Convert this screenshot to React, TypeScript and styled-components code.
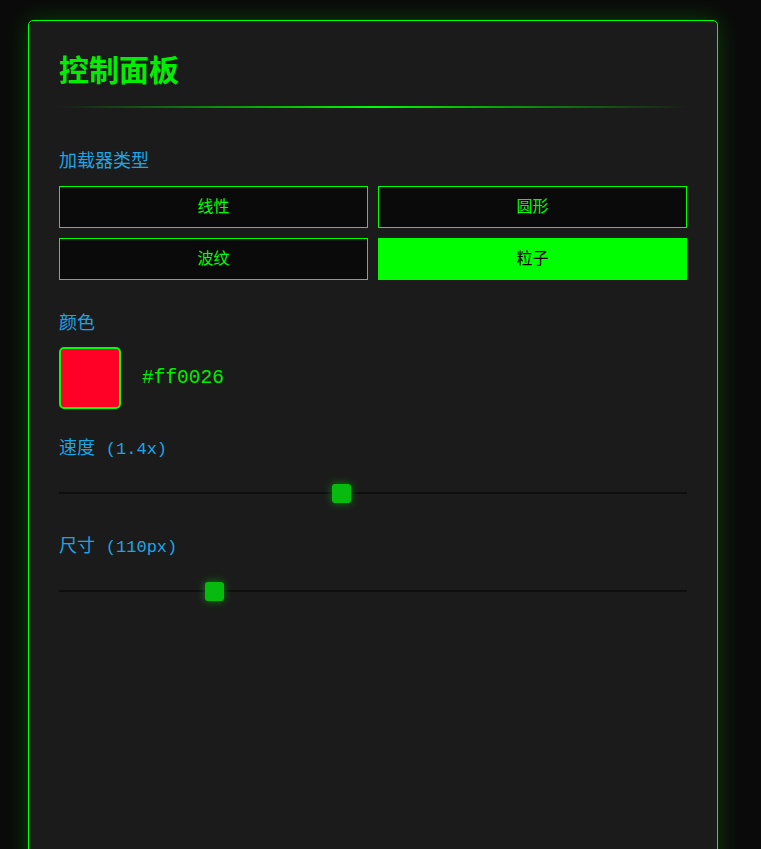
import { FC, useState } from 'react';
import styled, { createGlobalStyle } from 'styled-components';

const GlobalStyle = createGlobalStyle`
    body {
        margin: 0;
        background: #0a0a0a;
        font-family: "Liberation Mono", "Noto Sans CJK SC", monospace;
    }
`;

const Panel = styled.section`
    box-sizing: border-box;
    width: 690px;
    min-height: 900px;
    margin: 20px 28px;
    padding: 30px;
    background: #1b1b1b;
    border: 1px solid #00ff00;
    border-radius: 5px;
    box-shadow: 0 0 24px rgba(0, 255, 0, 0.22);
`;

const Title = styled.h1`
    margin: 2px 0 0;
    color: #00ee00;
    font-size: 30px;
    font-weight: bold;
    line-height: 40px;
`;

const Divider = styled.div`
    height: 2px;
    margin: 13px 0 42px;
    background: linear-gradient(90deg, transparent, #00ff00, transparent);
`;

const Section = styled.div<{ $space?: number }>`
    margin-bottom: ${({ $space = 28 }) => $space}px;
`;

const Label = styled.div`
    color: #1ba6e4;
    font-size: 18px;
    line-height: 24px;
    margin-bottom: 12px;

    span {
        font-size: 17px;
    }
`;

const ButtonGrid = styled.div`
    display: grid;
    grid-template-columns: 1fr 1fr;
    gap: 10px;
`;

const TypeButton = styled.button<{ $active: boolean }>`
    height: 42px;
    padding: 0 0 5px;
    font-family: inherit;
    font-size: 16px;
    color: ${({ $active }) => ($active ? '#000' : '#00ff00')};
    background: ${({ $active }) => ($active ? '#00ff00' : '#0a0a0a')};
    border: 1px solid #00ff00;
    cursor: pointer;
`;

const ColorRow = styled.div`
    display: flex;
    align-items: center;
    gap: 21px;
    margin-top: -1px;
`;

const Swatch = styled.div<{ $color: string }>`
    box-sizing: border-box;
    width: 62px;
    height: 62px;
    border: 2px solid #00ff00;
    border-radius: 5px;
    background: ${({ $color }) => $color};
`;

const HexText = styled.span`
    color: #00ee00;
    font-size: 19.5px;
`;

const Slider = styled.input`
    -webkit-appearance: none;
    appearance: none;
    display: block;
    width: 100%;
    height: 2px;
    margin: 30px 0 41px;
    background: #0e0e0e;
    outline: none;

    &::-webkit-slider-thumb {
        -webkit-appearance: none;
        width: 19px;
        height: 19px;
        border-radius: 3px;
        background: #07bb0e;
        box-shadow: 0 0 8px rgba(0, 255, 0, 0.45);
        cursor: pointer;
    }
`;

const loaderTypes = ['线性', '圆形', '波纹', '粒子'];

const App: FC = () => {
    const [type, setType] = useState('粒子');
    const [speed, setSpeed] = useState(1.4);
    const [size, setSize] = useState(110);
    const color = '#ff0026';

    return (
        <>
            <GlobalStyle />
            <Panel>
                <Title>控制面板</Title>
                <Divider />
                <Section $space={32}>
                    <Label>加载器类型</Label>
                    <ButtonGrid>
                        {loaderTypes.map((t) => (
                            <TypeButton key={t} $active={t === type} onClick={() => setType(t)}>
                                {t}
                            </TypeButton>
                        ))}
                    </ButtonGrid>
                </Section>
                <Section>
                    <Label>颜色</Label>
                    <ColorRow>
                        <Swatch $color={color} />
                        <HexText>{color}</HexText>
                    </ColorRow>
                </Section>
                <Section>
                    <Label>
                        速度 <span>({speed.toFixed(1)}x)</span>
                    </Label>
                    <Slider
                        type="range"
                        min={0.1}
                        max={3}
                        step={0.1}
                        value={speed}
                        onChange={(e) => setSpeed(Number(e.target.value))}
                    />
                </Section>
                <Section>
                    <Label>
                        尺寸 <span>({size}px)</span>
                    </Label>
                    <Slider
                        type="range"
                        min={50}
                        max={300}
                        value={size}
                        onChange={(e) => setSize(Number(e.target.value))}
                    />
                </Section>
            </Panel>
        </>
    );
};

export default App;
